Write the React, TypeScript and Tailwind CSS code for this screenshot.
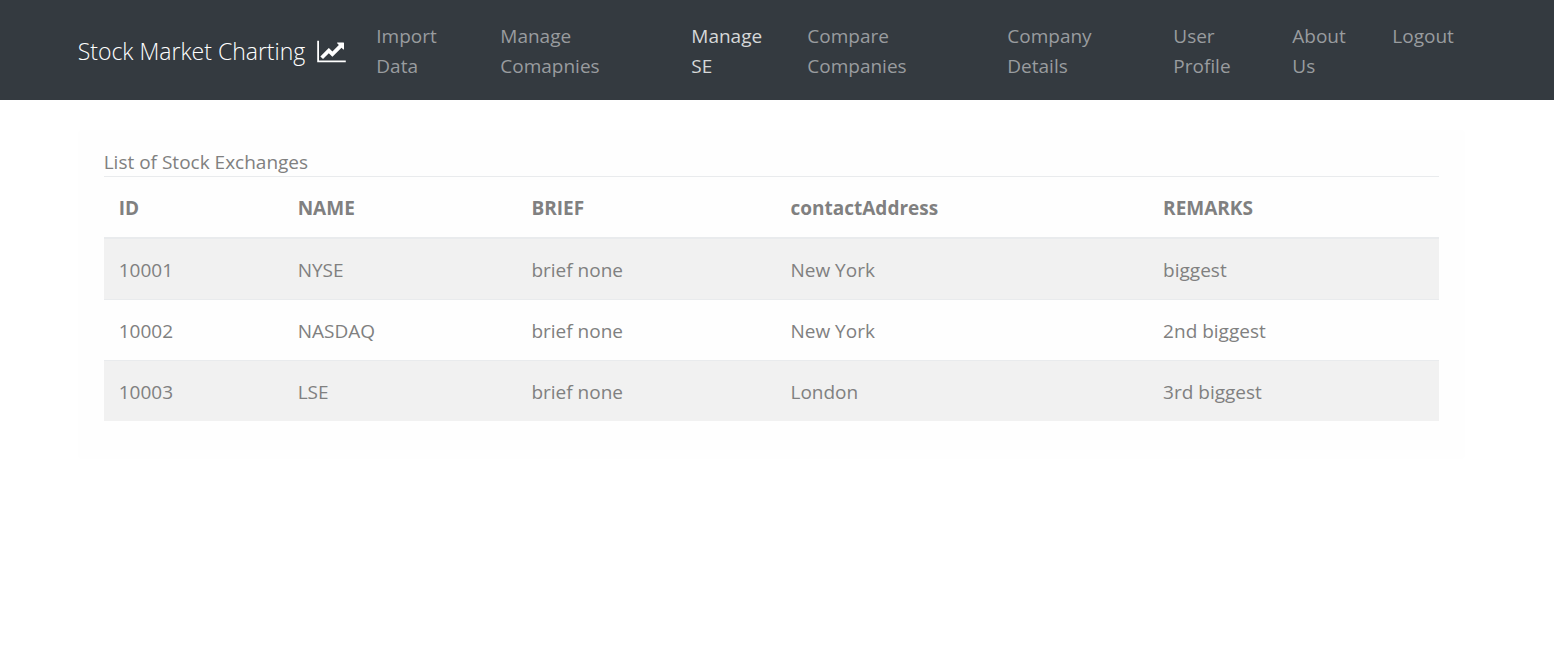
const navItems = [
  { label: "Import Data", cell: "w-[124px]", text: "w-[80px]" },
  { label: "Manage Comapnies", cell: "w-[191px]", text: "w-[120px]" },
  { label: "Manage SE", cell: "w-[116px]", text: "w-[80px]", active: true },
  { label: "Compare Companies", cell: "w-[200px]", text: "w-[120px]" },
  { label: "Company Details", cell: "w-[166px]", text: "w-[100px]" },
  { label: "User Profile", cell: "w-[119px]", text: "w-[80px]" },
  { label: "About Us", cell: "w-[100px]", text: "w-[64px]" },
  { label: "Logout", cell: "w-[84px]", text: "w-[72px]" },
];

const columns = [
  { label: "ID", width: "w-[13.4%]" },
  { label: "NAME", width: "w-[17.5%]" },
  { label: "BRIEF", width: "w-[19.4%]" },
  { label: "contactAddress", width: "w-[27.9%]" },
  { label: "REMARKS", width: "w-[21.8%]" },
];

const exchanges = [
  ["10001", "NYSE", "brief none", "New York", "biggest"],
  ["10002", "NASDAQ", "brief none", "New York", "2nd biggest"],
  ["10003", "LSE", "brief none", "London", "3rd biggest"],
];

function LineChartIcon() {
  return (
    <svg viewBox="0 0 2048 1792" className="h-[25px] w-[29px] shrink-0" fill="currentColor" aria-hidden="true">
      <path d="M2048 1536v128H0V128h128v1408h1920zM1920 288v435q0 21-19.5 29.5T1865 745l-121-121-633 633q-10 10-23 10t-23-10l-233-233-416 416-192-192 585-585q10-10 23-10t23 10l233 233 464-464-121-121q-16-16-7.5-35.5T1453 256h435q14 0 23 9t9 23z" />
    </svg>
  );
}

export default function App() {
  return (
    <div className="min-h-screen bg-white font-['Open_Sans','Noto_Sans',sans-serif] text-[19px] leading-[30px] text-[#808080]">
      <header className="bg-[#343a40]">
        <div className="mx-auto flex w-[90%] items-center pt-[21px] pb-[19px]">
          <a href="#" className="mr-[30px] flex shrink-0 items-center gap-3 whitespace-nowrap text-[23px] font-light text-white">
            Stock Market Charting
            <LineChartIcon />
          </a>
          <nav className="min-w-0 flex-1">
            <ul className="flex">
              {navItems.map((item) => (
                <li key={item.label} className={item.cell}>
                  <a
                    href="#"
                    aria-current={item.active ? "page" : undefined}
                    className={`block ${item.text} ${item.active ? "text-[#d6d8d9]" : "text-[#999c9f]"}`}
                  >
                    {item.label}
                  </a>
                </li>
              ))}
            </ul>
          </nav>
        </div>
      </header>
      <main className="mx-auto w-[90%] pt-[30px]">
        <section className="mr-[11px] rounded bg-[#fefefe] px-[26px] pt-[18px] pb-[38px]">
          <h1 className="leading-[28px]">List of Stock Exchanges</h1>
          <table className="w-full table-fixed border-collapse text-left">
            <thead>
              <tr>
                {columns.map((column) => (
                  <th
                    key={column.label}
                    scope="col"
                    className={`${column.width} border-t border-b-2 border-t-[#e9ebed] border-b-[#e9ebed] px-[15px] pt-4 pb-[14px] font-bold`}
                  >
                    {column.label}
                  </th>
                ))}
              </tr>
            </thead>
            <tbody>
              {exchanges.map((row) => (
                <tr key={row[0]} className="odd:bg-[#f1f1f1]">
                  {row.map((value, index) => (
                    <td key={index} className="border-t border-[#e9ebed] px-[15px] pt-4 pb-[14px]">
                      {value}
                    </td>
                  ))}
                </tr>
              ))}
            </tbody>
          </table>
        </section>
      </main>
    </div>
  );
}
